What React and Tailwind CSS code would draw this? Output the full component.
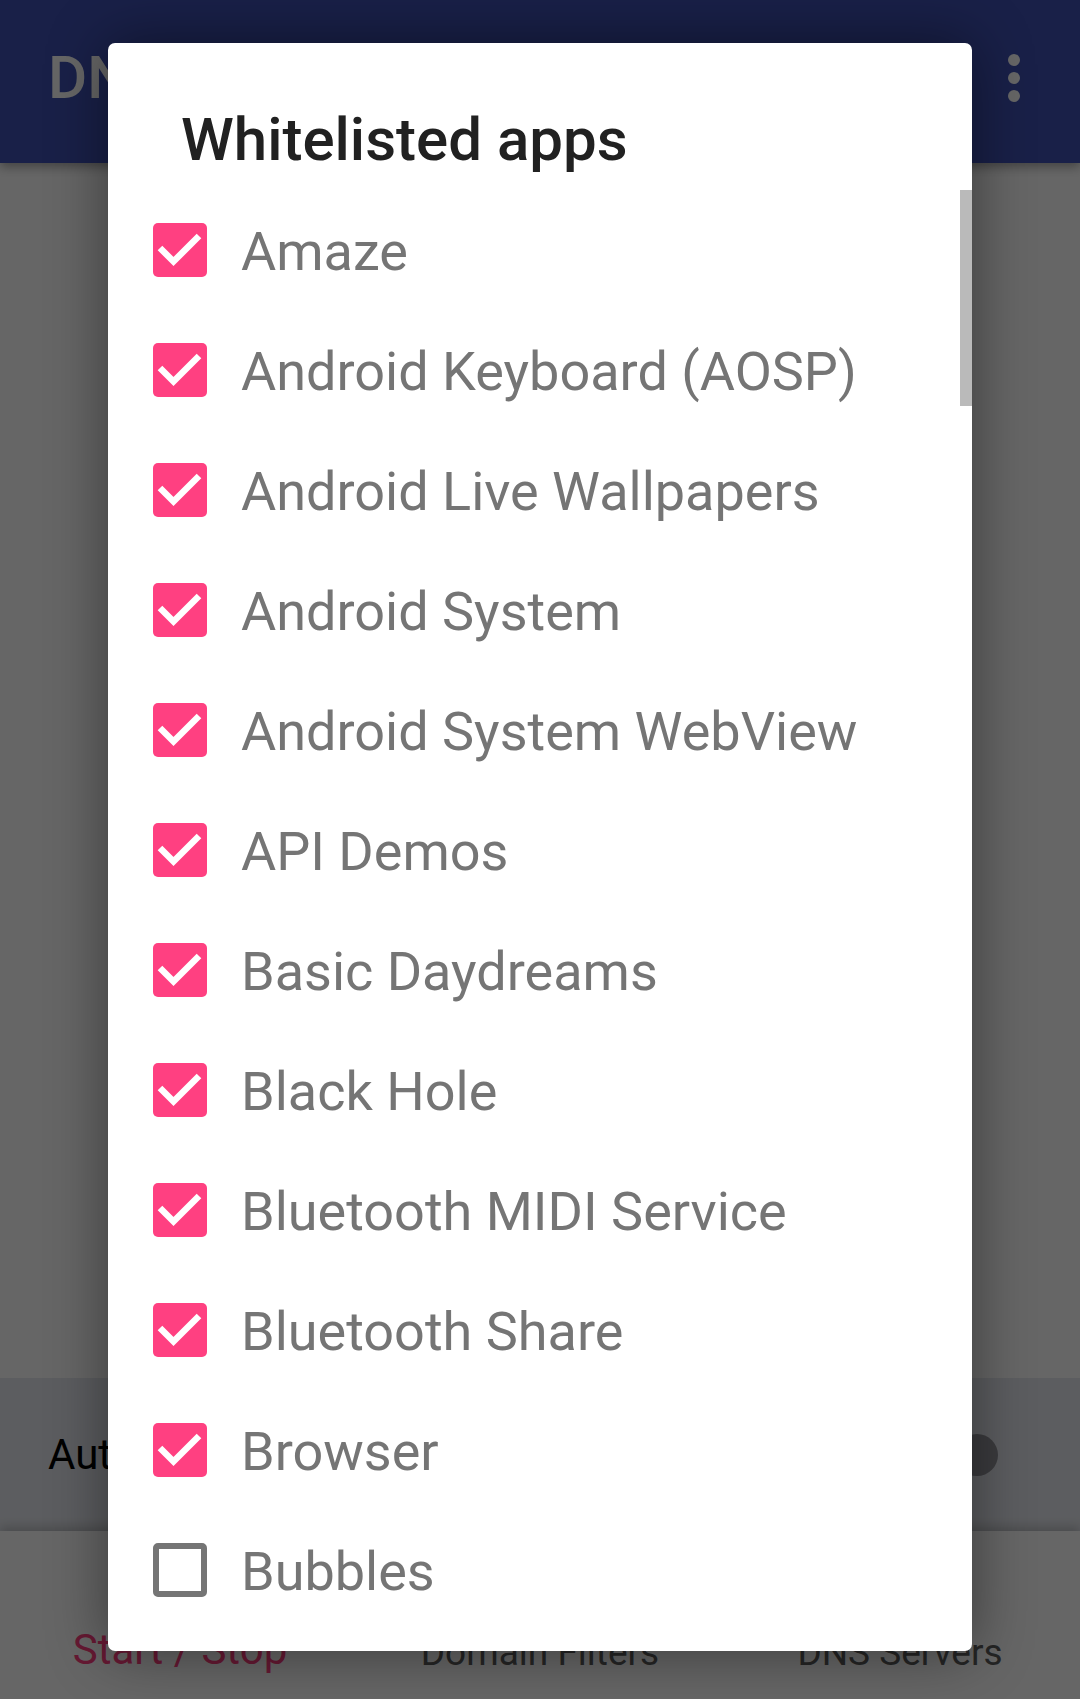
import React from 'react'

const apps = [
    { name: 'Amaze', checked: true },
    { name: 'Android Keyboard (AOSP)', checked: true },
    { name: 'Android Live Wallpapers', checked: true },
    { name: 'Android System', checked: true },
    { name: 'Android System WebView', checked: true },
    { name: 'API Demos', checked: true },
    { name: 'Basic Daydreams', checked: true },
    { name: 'Black Hole', checked: true },
    { name: 'Bluetooth MIDI Service', checked: true },
    { name: 'Bluetooth Share', checked: true },
    { name: 'Browser', checked: true },
    { name: 'Bubbles', checked: false },
]

const CheckBox = ({ checked }) => {
    if (!checked) {
        return <div className="w-[54px] h-[54px] shrink-0 rounded-[5px] border-[6px] border-[#757575] bg-white" />
    }
    return (
        <div className="w-[54px] h-[54px] shrink-0 rounded-[5px] bg-[#ff4081]">
            <svg width="54" height="54" viewBox="0 0 54 54">
                <path d="M7 25 L20.5 38.5 L46 13" fill="none" stroke="#fff" strokeWidth="6.5" />
            </svg>
        </div>
    )
}

const App = () => {
    return (
        <div className="relative w-[1080px] h-[1699px] overflow-hidden bg-white font-['Roboto',sans-serif] flex flex-col">
            {/* Toolbar */}
            <div className="h-[163px] shrink-0 bg-[#3f51b5] flex items-center justify-between pl-[48px] pr-[60px] shadow-[0_4px_10px_rgba(0,0,0,0.35)] z-10">
                <span className="text-white text-[60px] font-medium leading-none pb-[8px]">DNS66</span>
                <div className="flex flex-col gap-[6px] pb-[8px]">
                    <span className="w-[12px] h-[12px] rounded-full bg-white" />
                    <span className="w-[12px] h-[12px] rounded-full bg-white" />
                    <span className="w-[12px] h-[12px] rounded-full bg-white" />
                </div>
            </div>

            <div className="flex-1 bg-white" />

            {/* Setting row */}
            <div className="h-[153px] shrink-0 bg-[#e6e9ef] flex items-center justify-between pl-[48px] pr-[82px]">
                <span className="text-black text-[42px] leading-none">Automatic restart</span>
                <div className="relative w-[72px] h-[42px] flex items-center">
                    <div className="w-[64px] h-[24px] rounded-full bg-[#b9bcc4]" />
                    <div className="absolute right-0 top-0 w-[42px] h-[42px] rounded-full bg-[#93949b]" />
                </div>
            </div>

            {/* Bottom tabs */}
            <div className="h-[168px] shrink-0 bg-white grid grid-cols-3 items-end pb-[28px] shadow-[0_-4px_10px_rgba(0,0,0,0.2)]">
                <span className="text-center text-[42px] leading-none text-[#ff4081]">Start / Stop</span>
                <span className="text-center text-[37px] leading-none text-[#5c5c5c]">Domain Filters</span>
                <span className="text-center text-[37px] leading-none text-[#5c5c5c]">DNS Servers</span>
            </div>

            {/* Scrim */}
            <div className="absolute inset-0 bg-black/60 z-20" />

            {/* Dialog */}
            <div className="absolute left-[108px] top-[43px] w-[864px] h-[1608px] bg-white rounded-[7px] overflow-hidden z-30 shadow-[0_0_60px_rgba(0,0,0,0.45)]">
                <div className="h-[147px] pt-[64px] pl-[73px]">
                    <h1 className="text-[60px] leading-[66px] font-medium text-[#212121]">Whitelisted apps</h1>
                </div>
                <div className="flex flex-col">
                    {apps.map((app) => (
                        <div key={app.name} className="h-[120px] shrink-0 flex items-center pl-[45px] gap-[34px]">
                            <CheckBox checked={app.checked} />
                            <span className="text-[54px] leading-none pt-[4px] text-[#757575] whitespace-nowrap">{app.name}</span>
                        </div>
                    ))}
                </div>
                <div className="absolute right-0 top-[147px] w-[12px] h-[216px] bg-[#bababa]" />
            </div>
        </div>
    )
}

export default App
